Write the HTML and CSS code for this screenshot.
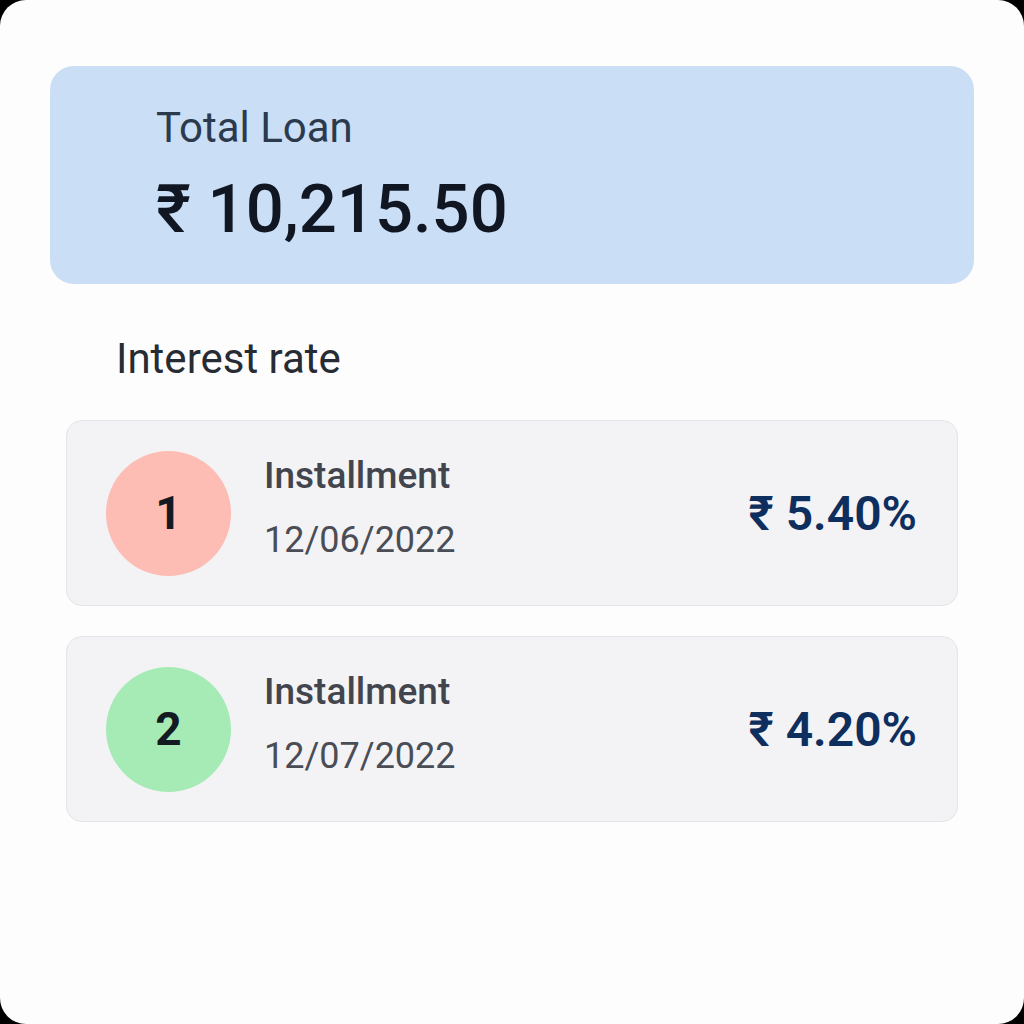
FILE: index.html
```html
<!DOCTYPE html>
<html>
<head>
<meta charset="utf-8">
<link rel="stylesheet" href="styles.css">
</head>
<body>
<div class="frame">
  <section class="total">
    <div class="total-label">Total Loan</div>
    <div class="total-amount">₹ 10,215.50</div>
  </section>
  <h2 class="section-title">Interest rate</h2>
  <div class="list">
    <div class="row">
      <div class="badge badge-red">1</div>
      <div class="info">
        <div class="info-title">Installment</div>
        <div class="info-date">12/06/2022</div>
      </div>
      <div class="rate">₹ 5.40%</div>
    </div>
    <div class="row">
      <div class="badge badge-green">2</div>
      <div class="info">
        <div class="info-title">Installment</div>
        <div class="info-date">12/07/2022</div>
      </div>
      <div class="rate">₹ 4.20%</div>
    </div>
  </div>
</div>
</body>
</html>
```
FILE: styles.css
```css
html, body {
  margin: 0;
  padding: 0;
  background: #000;
}
body {
  font-family: Roboto, "Noto Sans", sans-serif;
}
.frame {
  width: 1024px;
  height: 1024px;
  box-sizing: border-box;
  background: #fdfdfd;
  border-radius: 26px;
  padding: 66px 50px 0 50px;
}
.total {
  background: #cadef6;
  border-radius: 24px;
  height: 218px;
  box-sizing: border-box;
  padding: 37px 0 0 106px;
}
.total-label {
  font-size: 42px;
  line-height: 50px;
  color: #2b3a4d;
  font-weight: 400;
}
.total-amount {
  margin-top: 16px;
  font-size: 67px;
  line-height: 80px;
  font-weight: 500;
  color: #111722;
}
.section-title {
  margin: 50px 0 0 66px;
  font-size: 42px;
  line-height: 50px;
  font-weight: 400;
  color: #272b33;
}
.list {
  margin: 36px 16px 0 16px;
  display: flex;
  flex-direction: column;
  gap: 30px;
}
.row {
  height: 186px;
  box-sizing: border-box;
  background: #f3f3f6;
  border: 1px solid #e4e4ea;
  border-radius: 16px;
  display: flex;
  align-items: center;
  padding: 0 40px 0 39px;
}
.badge {
  width: 125px;
  height: 125px;
  border-radius: 50%;
  display: flex;
  align-items: center;
  justify-content: center;
  font-size: 46px;
  font-weight: 700;
  color: #141a22;
  flex-shrink: 0;
}
.badge-red { background: #fdbdb4; }
.badge-green { background: #a6ebb6; }
.info {
  margin: 0 0 11px 33px;
  display: flex;
  flex-direction: column;
  gap: 20px;
  flex: 1;
}
.info-title {
  font-size: 37px;
  line-height: 44px;
  font-weight: 500;
  color: #42454d;
}
.info-date {
  font-size: 36px;
  line-height: 44px;
  color: #4a4d55;
}
.rate {
  font-size: 48px;
  font-weight: 600;
  color: #0e2e5e;
}
```
